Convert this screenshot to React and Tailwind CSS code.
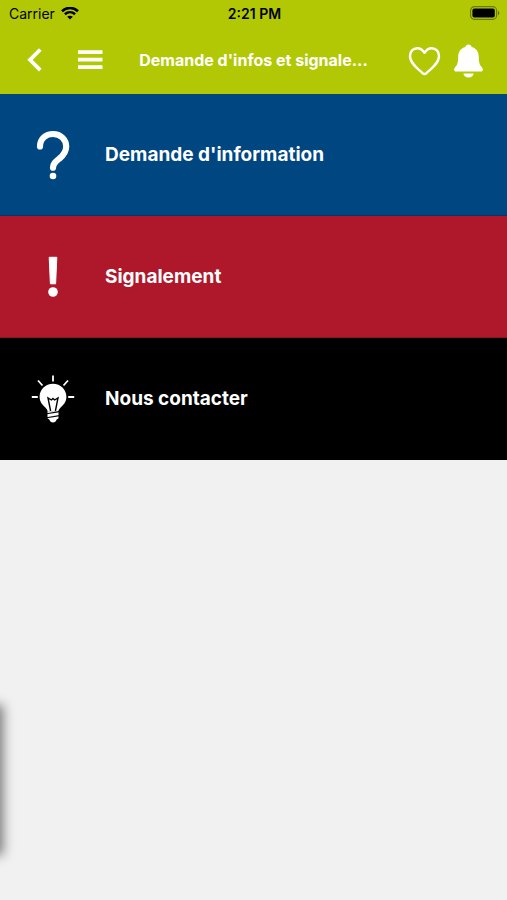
import { useState } from 'react';

const QuestionIcon = () => (
    <svg viewBox="0 0 48 52" className="w-12 h-[52px]" fill="none" aria-hidden="true">
        <path d="M11 17.500C11 9.500 17 5 24 5c7.500 0 13.200 5.500 13.200 12.500 0 5.500-2.700 8.700-6.700 12-4 3.200-6.500 5-6.500 9.200"
            stroke="white" strokeWidth="6.200" strokeLinecap="round" />
        <circle cx="24" cy="47" r="3.300" fill="white" />
    </svg>
);

const ExclamationIcon = () => (
    <svg viewBox="0 0 48 52" className="w-12 h-[52px]" fill="white" aria-hidden="true">
        <path d="M20.200 6.300h7.600l-1.200 26.500h-5.200z" stroke="white" strokeWidth="1" strokeLinejoin="round" />
        <circle cx="24" cy="41" r="4.800" />
    </svg>
);

const BulbIcon = () => (
    <svg viewBox="0 0 48 52" className="w-12 h-[52px]" fill="none" aria-hidden="true">
        <path d="M24 2.500v6M9 7.500l4.500 5M39 7.500l-4.500 5M2.800 24h6M39.200 24h6" stroke="white" strokeWidth="1.800" />
        <path d="M24 10.700c-7.500 0-13.400 5.800-13.400 13 0 5.500 3.400 8.500 6 11 1.200 1.200 1.800 2.500 2.100 3.500h10.600c.300-1 .900-2.300 2.100-3.500 2.600-2.500 6-5.500 6-11 0-7.200-5.900-13-13.400-13z"
            fill="white" />
        <path d="M21.600 38 19 25l3.400 2 1.600-1.500 1.600 1.500 3.400-2-2.600 13" stroke="black" strokeWidth="1.400" />
        <path d="M18.500 38.200h11v7l-2 1.500c-.500 1.800-1.700 2.800-3.500 2.800s-3-1-3.500-2.800l-2-1.500z" fill="white" />
        <path d="M17.500 40.800l13-2.200M17.500 44.800l13-2.200" stroke="black" strokeWidth="1.100" />
    </svg>
);

const items = [
    { label: "Demande d'information", icon: QuestionIcon, color: 'bg-[#004680]' },
    { label: 'Signalement', icon: ExclamationIcon, color: 'bg-[#af182b]' },
    { label: 'Nous contacter', icon: BulbIcon, color: 'bg-black' },
];

function StatusBar() {
    return (
        <div className="grid grid-cols-3 items-center h-7 pl-[9px] pr-[7px] text-sm text-black">
            <div className="flex items-center gap-[6px]">
                <span>Carrier</span>
                <svg viewBox="0 0 18 14" className="w-[18px] h-[14px]" fill="none" stroke="black" strokeWidth="2.600" aria-hidden="true">
                    <path d="M1 4.200c4.600-4.400 11.400-4.400 16 0M3.900 7.300c3-2.800 7.200-2.800 10.200 0" />
                    <path d="M9 12.500 6.200 9.700c1.600-1.400 4-1.400 5.600 0z" fill="black" stroke="none" />
                </svg>
            </div>
            <span className="text-center font-semibold">2:21 PM</span>
            <svg viewBox="0 0 31 16" className="w-[31px] h-4 justify-self-end" aria-hidden="true">
                <rect x="1.600" y="0.700" width="26" height="12.600" rx="3.800" fill="none" stroke="black" strokeOpacity="0.400" strokeWidth="1.200" />
                <rect x="3.400" y="2.500" width="22.400" height="9" rx="2" fill="black" />
                <path d="M29 4.800c1.800.700 1.800 3.700 0 4.400z" fill="black" fillOpacity="0.450" />
            </svg>
        </div>
    );
}

export default function App() {
    const [liked, setLiked] = useState(false);

    return (
        <div className="relative min-h-screen overflow-hidden bg-[#f1f1f1] font-['Inter',sans-serif]">
            <header className="bg-[#b2c805] pb-[2px]">
                <StatusBar />
                <div className="flex items-center h-16 pl-6 pr-[22px] text-white">
                    <button type="button" aria-label="Retour" className="shrink-0">
                        <svg viewBox="0 0 20 24" className="w-5 h-6" fill="none" stroke="white" strokeWidth="3.800">
                            <path d="M16.300 1.500 6 11.800l10.300 10.300" />
                        </svg>
                    </button>
                    <button type="button" aria-label="Menu" className="shrink-0 ml-8">
                        <svg viewBox="0 0 28 24" className="w-7 h-6" fill="none" stroke="white" strokeWidth="3.800">
                            <path d="M2 4.200h24.500M2 11.700h24.500M2 19.200h24.500" />
                        </svg>
                    </button>
                    <h1 className="flex-1 pr-1 text-center text-base font-bold truncate">Demande d'infos et signale...</h1>
                    <button type="button" aria-label="Favoris" aria-pressed={liked} onClick={() => setLiked(!liked)} className="shrink-0">
                        <svg viewBox="0 0 34 32" className="w-[34px] h-8" fill={liked ? 'white' : 'none'} stroke="white" strokeWidth="2.400" strokeLinejoin="round">
                            <path d="M17.500 8.800C15.500 5.500 13 4.200 10.300 4.200 6 4.200 3 7.500 3 12c0 7.300 8 13 12.400 17 1.500 1.300 2.700 1.300 4.200 0C24 25 32 19.300 32 12c0-4.500-3-7.800-7.300-7.800-2.700 0-5.200 1.300-7.200 4.600z" />
                        </svg>
                    </button>
                    <button type="button" aria-label="Notifications" className="shrink-0 ml-3">
                        <svg viewBox="0 0 32 36" className="w-8 h-9" fill="white">
                            <path d="M15.500 2.500c-1.700 0-2.900 1-3.200 2.500C7.500 6.300 5.200 10 5.200 15c0 6.500-1.200 8.300-3.200 10.400-1.600 1.900-1 4 1.300 4h24.400c2.300 0 2.900-2.100 1.300-4-2-2.100-3.200-3.900-3.200-10.400 0-5-2.300-8.700-7.100-10-.300-1.500-1.500-2.500-3.200-2.500z" />
                            <path d="M10.300 31.500h10.400c-.600 2.400-2.500 4-5.200 4s-4.600-1.600-5.200-4z" />
                        </svg>
                    </button>
                </div>
            </header>

            <nav>
                {items.map(({ label, icon: Icon, color }) => (
                    <a key={label} href="#"
                        className={`flex items-center gap-7 h-[122px] pl-[29px] pr-6 border-b border-black/20 text-white text-[19px] leading-7 font-bold ${color}`}>
                        <Icon />
                        <span>{label}</span>
                    </a>
                ))}
            </nav>

            {/* Closed drawer, only its shadow shows */}
            <div className="absolute bottom-12 -left-3 w-3 h-[144px] shadow-[0_0_12px_3px_rgba(0,0,0,0.500)]" />
        </div>
    );
}
